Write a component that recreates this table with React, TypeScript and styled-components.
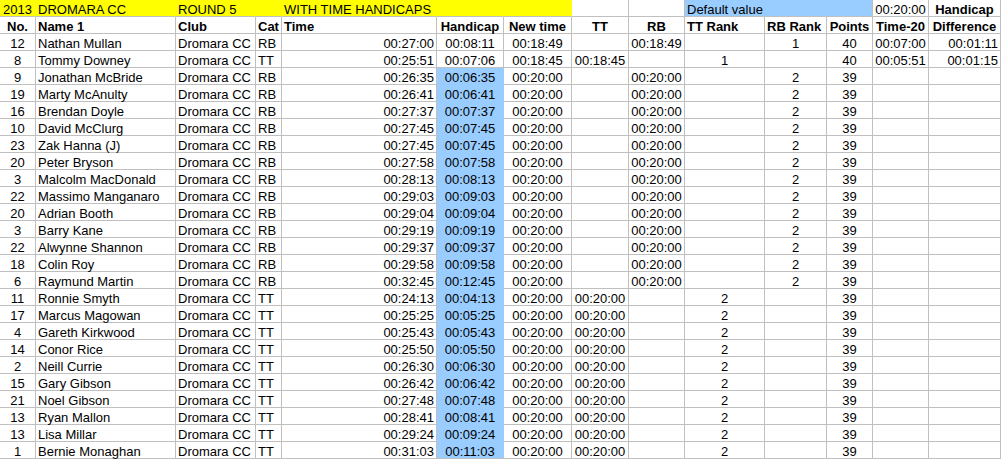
import React from "react";
import styled, { createGlobalStyle } from "styled-components";

const GlobalStyle = createGlobalStyle`
  html, body { margin: 0; padding: 0; background: #ffffff; }
  body { font-family: "Liberation Sans", Arial, sans-serif; color: #000; }
`;

const GRID = "#c0c0c0";
const YELLOW = "#ffff00";
const BLUE = "#99ccff";

type Align = "left" | "center" | "right";

const Sheet = styled.div`
  display: grid;
  grid-template-columns: 36px 140px 80px 26px 155px 67px 68px 57px 56px 80px 62px 46px 56px 72px;
  grid-auto-rows: 17px;
  width: 1001px;
  background: #ffffff;
`;

const Cell = styled.div<{ $align?: Align; $bold?: boolean; $fill?: string; $edge?: string; $under?: string }>`
  box-sizing: border-box;
  height: 17px;
  padding: 3px 2px 0 2px;
  font-size: 13px;
  line-height: 13px;
  font-weight: ${(p) => (p.$bold ? 700 : 400)};
  text-align: ${(p) => p.$align ?? "left"};
  white-space: nowrap;
  overflow: visible;
  background: ${(p) => p.$fill ?? "transparent"};
  border-right: 1px solid ${(p) => p.$edge ?? p.$fill ?? GRID};
  border-bottom: 1px solid ${(p) => p.$under ?? GRID};
`;

type Row = {
  no: number;
  name: string;
  cat: "RB" | "TT";
  time: string;
  handicap: string;
  newTime: string;
  tt: string;
  rb: string;
  ttRank: string;
  rbRank: string;
  points: string;
  t20: string;
  diff: string;
  blue: boolean;
};

const mk = (no: number, name: string, cat: "RB" | "TT", time: string, handicap: string): Row => ({
  no,
  name,
  cat,
  time,
  handicap,
  newTime: "00:20:00",
  tt: cat === "TT" ? "00:20:00" : "",
  rb: cat === "RB" ? "00:20:00" : "",
  ttRank: cat === "TT" ? "2" : "",
  rbRank: cat === "RB" ? "2" : "",
  points: "39",
  t20: "",
  diff: "",
  blue: true,
});

const rows: Row[] = [
  {
    no: 12, name: "Nathan Mullan", cat: "RB", time: "00:27:00", handicap: "00:08:11", newTime: "00:18:49",
    tt: "", rb: "00:18:49", ttRank: "", rbRank: "1", points: "40", t20: "00:07:00", diff: "00:01:11", blue: false,
  },
  {
    no: 8, name: "Tommy Downey", cat: "TT", time: "00:25:51", handicap: "00:07:06", newTime: "00:18:45",
    tt: "00:18:45", rb: "", ttRank: "1", rbRank: "", points: "40", t20: "00:05:51", diff: "00:01:15", blue: false,
  },
  mk(9, "Jonathan McBride", "RB", "00:26:35", "00:06:35"),
  mk(19, "Marty McAnulty", "RB", "00:26:41", "00:06:41"),
  mk(16, "Brendan Doyle", "RB", "00:27:37", "00:07:37"),
  mk(10, "David McClurg", "RB", "00:27:45", "00:07:45"),
  mk(23, "Zak Hanna (J)", "RB", "00:27:45", "00:07:45"),
  mk(20, "Peter Bryson", "RB", "00:27:58", "00:07:58"),
  mk(3, "Malcolm MacDonald", "RB", "00:28:13", "00:08:13"),
  mk(22, "Massimo Manganaro", "RB", "00:29:03", "00:09:03"),
  mk(20, "Adrian Booth", "RB", "00:29:04", "00:09:04"),
  mk(3, "Barry Kane", "RB", "00:29:19", "00:09:19"),
  mk(22, "Alwynne Shannon", "RB", "00:29:37", "00:09:37"),
  mk(18, "Colin Roy", "RB", "00:29:58", "00:09:58"),
  mk(6, "Raymund Martin", "RB", "00:32:45", "00:12:45"),
  mk(11, "Ronnie Smyth", "TT", "00:24:13", "00:04:13"),
  mk(17, "Marcus Magowan", "TT", "00:25:25", "00:05:25"),
  mk(4, "Gareth Kirkwood", "TT", "00:25:43", "00:05:43"),
  mk(14, "Conor Rice", "TT", "00:25:50", "00:05:50"),
  mk(2, "Neill Currie", "TT", "00:26:30", "00:06:30"),
  mk(15, "Gary Gibson", "TT", "00:26:42", "00:06:42"),
  mk(21, "Noel Gibson", "TT", "00:27:48", "00:07:48"),
  mk(13, "Ryan Mallon", "TT", "00:28:41", "00:08:41"),
  mk(13, "Lisa Millar", "TT", "00:29:24", "00:09:24"),
  mk(1, "Bernie Monaghan", "TT", "00:31:03", "00:11:03"),
];

const headers: { label: string; align: Align }[] = [
  { label: "No.", align: "center" },
  { label: "Name 1", align: "left" },
  { label: "Club", align: "left" },
  { label: "Cat", align: "left" },
  { label: "Time", align: "left" },
  { label: "Handicap", align: "center" },
  { label: "New time", align: "center" },
  { label: "TT", align: "center" },
  { label: "RB", align: "center" },
  { label: "TT Rank", align: "left" },
  { label: "RB Rank", align: "left" },
  { label: "Points", align: "center" },
  { label: "Time-20", align: "center" },
  { label: "Difference", align: "center" },
];

export default function App() {
  return (
    <>
      <GlobalStyle />
      <Sheet>
        {/* Title row */}
        <Cell $fill={YELLOW} $align="center">2013</Cell>
        <Cell $fill={YELLOW}>DROMARA CC</Cell>
        <Cell $fill={YELLOW}>ROUND 5</Cell>
        <Cell $fill={YELLOW} />
        <Cell $fill={YELLOW}>WITH TIME HANDICAPS</Cell>
        <Cell $fill={YELLOW} />
        <Cell $fill={YELLOW} />
        <Cell />
        <Cell />
        <Cell $fill={BLUE}>Default value</Cell>
        <Cell $fill={BLUE} />
        <Cell $fill={BLUE} $edge={GRID} />
        <Cell $align="center">00:20:00</Cell>
        <Cell $align="center" $bold>Handicap</Cell>

        {/* Column headers */}
        {headers.map((h) => (
          <Cell key={h.label} $align={h.align} $bold>
            {h.label}
          </Cell>
        ))}

        {/* Data rows */}
        {rows.map((r, i) => (
          <React.Fragment key={i}>
            <Cell $align="center">{r.no}</Cell>
            <Cell>{r.name}</Cell>
            <Cell>Dromara CC</Cell>
            <Cell>{r.cat}</Cell>
            <Cell $align="right">{r.time}</Cell>
            <Cell
              $align="center"
              $fill={r.blue ? BLUE : undefined}
              $under={r.blue && i < rows.length - 1 ? BLUE : GRID}
            >
              {r.handicap}
            </Cell>
            <Cell $align="center">{r.newTime}</Cell>
            <Cell $align="center">{r.tt}</Cell>
            <Cell $align="center">{r.rb}</Cell>
            <Cell $align="center">{r.ttRank}</Cell>
            <Cell $align="center">{r.rbRank}</Cell>
            <Cell $align="center">{r.points}</Cell>
            <Cell $align="center">{r.t20}</Cell>
            <Cell $align="right">{r.diff}</Cell>
          </React.Fragment>
        ))}
      </Sheet>
    </>
  );
}
